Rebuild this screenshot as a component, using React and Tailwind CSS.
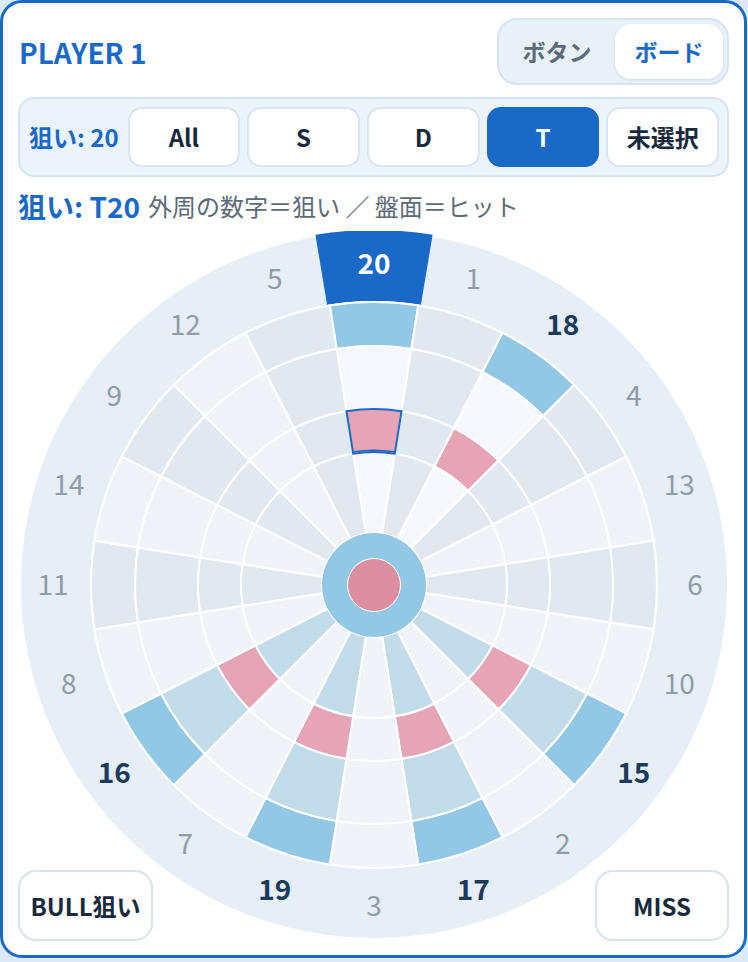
import React from "react";

// Dartboard segment order, clockwise from the top
const ORDER = [20, 1, 18, 4, 13, 6, 10, 15, 2, 17, 3, 19, 7, 16, 8, 11, 14, 9, 12, 5];

// Ring radii (px) of the board drawing
const R = {
  ring: 353,
  dOut: 283,
  dIn: 239,
  tOut: 176,
  tIn: 133,
  bull: 52,
  inner: 26,
};

const C = 354; // centre of the 708 x 708 board

const COLORS = {
  dark: "#e2e8ef",
  light: "#f0f4f8",
  double: "#92c8e5",
  triple: "#e6a4b7",
  paleSingle: "#c3dce9",
  faintSingle: "#f5f9fe",
};

// Hit heat per number: "aim" wedges have faint singles, "hit" wedges pale blue singles
const HEAT = { 20: "aim", 18: "aim", 15: "hit", 17: "hit", 19: "hit", 16: "hit" };
const BOLD = new Set([18, 15, 17, 19, 16]);

function pt(r, a) {
  const rad = (a * Math.PI) / 180;
  return [C + r * Math.sin(rad), C - r * Math.cos(rad)];
}

function sector(r1, r2, a1, a2) {
  const [x1, y1] = pt(r2, a1);
  const [x2, y2] = pt(r2, a2);
  const [x3, y3] = pt(r1, a2);
  const [x4, y4] = pt(r1, a1);
  return `M${x1} ${y1} A${r2} ${r2} 0 0 1 ${x2} ${y2} L${x3} ${y3} A${r1} ${r1} 0 0 0 ${x4} ${y4} Z`;
}

function Board() {
  const segs = [];
  ORDER.forEach((n, i) => {
    const a1 = i * 18 - 9;
    const a2 = i * 18 + 9;
    const base = i % 2 === 1 ? COLORS.dark : COLORS.light;
    const heat = HEAT[n];
    const single = heat === "aim" ? COLORS.faintSingle : heat === "hit" ? COLORS.paleSingle : base;
    const dbl = heat ? COLORS.double : base;
    const tri = heat ? COLORS.triple : base;
    segs.push(
      <g key={n}>
        <path d={sector(R.dIn, R.dOut, a1, a2)} fill={dbl} stroke="#ffffff" strokeWidth="2" />
        <path d={sector(R.tOut, R.dIn, a1, a2)} fill={single} stroke="#ffffff" strokeWidth="2" />
        <path d={sector(R.tIn, R.tOut, a1, a2)} fill={tri} stroke="#ffffff" strokeWidth="2" />
        <path d={sector(R.bull, R.tIn, a1, a2)} fill={single} stroke="#ffffff" strokeWidth="2" />
      </g>
    );
  });

  const labels = ORDER.map((n, i) => {
    const [x, y] = pt(321, i * 18);
    const isAim = n === 20;
    return (
      <text
        key={n}
        x={x}
        y={y - 2.5}
        textAnchor="middle"
        dominantBaseline="central"
        fontSize="28"
        fontWeight={isAim || BOLD.has(n) ? 700 : 400}
        fill={isAim ? "#ffffff" : BOLD.has(n) ? "#1c3a5c" : "#8f9dab"}
      >
        {n}
      </text>
    );
  });

  return (
    <svg width="708" height="708" viewBox="0 0 708 708" className="mx-auto block">
      <circle cx={C} cy={C} r={R.ring} fill="#e6eef6" />
      {/* aimed number on the outer ring */}
      <path d={sector(284, 355, -9.5, 9.5)} fill="#1a69c7" />
      <circle cx={C} cy={C} r={R.dOut + 1} fill="#ffffff" />
      {segs}
      {/* aimed treble outline */}
      <path d={sector(R.tIn, R.tOut, -9, 9)} fill={COLORS.triple} stroke="#1a69c7" strokeWidth="2" />
      <path d={sector(R.tIn + 1, R.tIn + 2.5, -8.6, 8.6)} fill="#1a69c7" />
      <circle cx={C} cy={C} r={R.bull + 1} fill="#ffffff" />
      <circle cx={C} cy={C} r={R.bull} fill="#92c8e5" />
      <circle cx={C} cy={C} r={R.inner + 1} fill="#ffffff" />
      <circle cx={C} cy={C} r={R.inner} fill="#dc8fa3" />
      {labels}
    </svg>
  );
}

export default function App() {
  const filters = ["All", "S", "D", "T", "未選択"];
  return (
    <div className="w-[748px] h-[962px] bg-[#dce9f8] font-['Noto_Sans_CJK_JP','Noto_Sans',sans-serif]">
      <div className="w-[747px] h-[958px] rounded-[22px] border-[3px] border-[#1a69c7] bg-white px-[15px] pt-[15px]">
        {/* header */}
        <div className="flex h-[67px] items-center justify-between">
          <div className="pl-[1px] text-[28px] font-bold leading-none text-[#1a69c7]">PLAYER 1</div>
          <div className="flex h-[67px] w-[232px] gap-[4px] rounded-[20px] border-2 border-[#d6e3f0] bg-[#e8f0f8] p-[4px]">
            <button className="flex-1 rounded-[16px] text-[23px] font-bold text-[#5b6b7b]">ボタン</button>
            <button className="flex-1 rounded-[16px] bg-white text-[23px] font-bold text-[#1a69c7] shadow-[0_1px_3px_rgba(30,60,100,0.12)]">
              ボード
            </button>
          </div>
        </div>

        {/* segment filter */}
        <div className="mt-[12px] flex h-[80px] items-center gap-[7px] rounded-[16px] border-2 border-[#d6e4f1] bg-[#ebf3fc] pl-[9px] pr-[8px]">
          <div className="mr-[2px] whitespace-nowrap text-[24px] font-bold text-[#1a69c7]">狙い: 20</div>
          {filters.map((f) => (
            <button
              key={f}
              className={
                f === "T"
                  ? "h-[60px] flex-1 rounded-[14px] border-2 border-[#1a69c7] bg-[#1a69c7] text-[24px] font-bold text-white"
                  : "h-[60px] flex-1 rounded-[14px] border-2 border-[#d9e5f0] bg-white text-[24px] font-bold text-[#17293d]"
              }
            >
              {f}
            </button>
          ))}
        </div>

        {/* current aim */}
        <div className="mt-[11px] flex h-[36px] items-center gap-[8px] whitespace-nowrap">
          <span className="text-[28px] font-bold text-[#1a69c7]">狙い: T20</span>
          <span className="text-[24px] text-[#5d6b79]">外周の数字＝狙い ／ 盤面＝ヒット</span>
        </div>

        {/* board */}
        <div className="relative mt-[7px] h-[708px]">
          <Board />
          <button className="absolute bottom-[-2px] left-0 h-[71px] w-[135px] rounded-[18px] border-2 border-[#d6e4f1] bg-white text-[24px] font-bold text-[#17293d]">
            BULL狙い
          </button>
          <button className="absolute bottom-[-2px] right-0 h-[71px] w-[134px] rounded-[18px] border-2 border-[#d6e4f1] bg-white text-[24px] font-bold text-[#17293d]">
            MISS
          </button>
        </div>
      </div>
    </div>
  );
}
